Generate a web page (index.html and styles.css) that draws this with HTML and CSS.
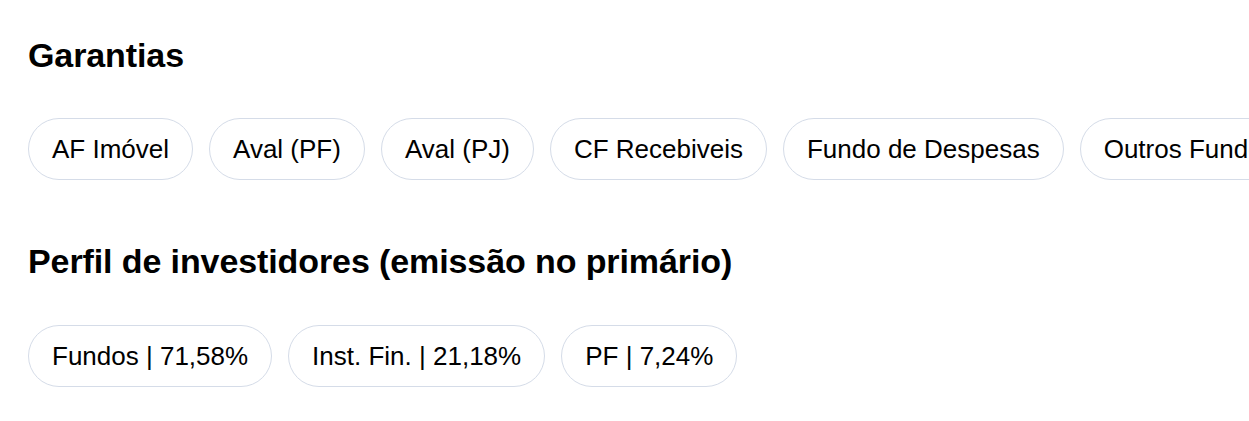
FILE: index.html
```html
<!DOCTYPE html>
<html lang="pt-BR">
<head>
<meta charset="utf-8">
<title>Garantias</title>
<link rel="stylesheet" href="styles.css">
</head>
<body>
<main class="page">
  <section class="block">
    <h2 class="title">Garantias</h2>
    <div class="chips">
      <span class="chip">AF Imóvel</span>
      <span class="chip">Aval (PF)</span>
      <span class="chip">Aval (PJ)</span>
      <span class="chip">CF Recebiveis</span>
      <span class="chip">Fundo de Despesas</span>
      <span class="chip">Outros Fundos</span>
    </div>
  </section>
  <section class="block">
    <h2 class="title">Perfil de investidores (emissão no primário)</h2>
    <div class="chips">
      <span class="chip">Fundos | 71,58%</span>
      <span class="chip">Inst. Fin. | 21,18%</span>
      <span class="chip">PF | 7,24%</span>
    </div>
  </section>
</main>
</body>
</html>
```

FILE: styles.css
```css
html, body {
  margin: 0;
  padding: 0;
  background: #ffffff;
  overflow: hidden;
}

body {
  font-family: "Liberation Sans", Arial, Helvetica, sans-serif;
  color: #000000;
}

.page {
  padding: 35px 0 0 28px;
}

.block {
  margin-bottom: 61px;
}

.block:last-child {
  margin-bottom: 0;
}

.title {
  margin: 0 0 44px 0;
  font-size: 34px;
  line-height: 40px;
  font-weight: 700;
  letter-spacing: -0.1px;
}

.block:first-child .title {
  margin-bottom: 43px;
}

.chips {
  display: flex;
  flex-wrap: nowrap;
  gap: 16px;
  overflow: hidden;
}

.chip {
  flex-shrink: 0;
  display: inline-flex;
  align-items: center;
  box-sizing: border-box;
  height: 62px;
  padding: 0 23px;
  border: 1px solid #d5dce8;
  border-radius: 31px;
  font-size: 26px;
  line-height: 30px;
  white-space: nowrap;
}
```
